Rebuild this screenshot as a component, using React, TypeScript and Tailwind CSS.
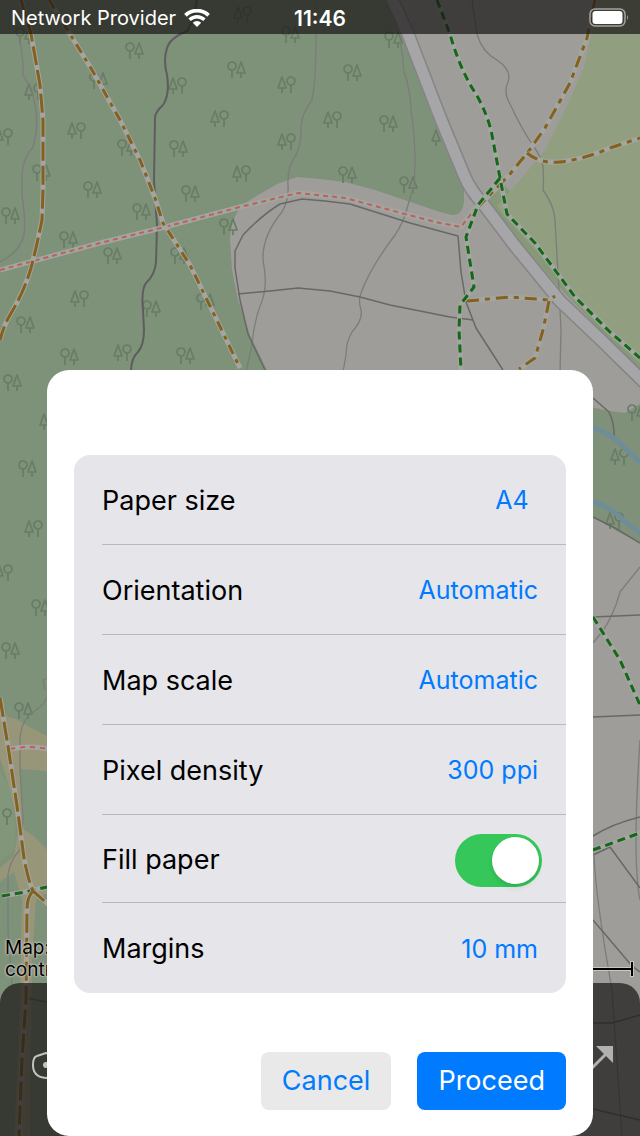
import { useState } from "react";

type Pair = [number, number];

const BROADLEAF_FIRST: Pair[] = [
  [134, 50], [98, 80], [126, 147], [178, 148], [41, 172], [92, 189], [190, 193], [236, 69],
  [24, 35], [290, 34], [393, 39], [352, 72], [388, 123], [347, 174], [408, 184], [10, 215],
  [141, 211], [68, 239], [112, 255], [228, 226], [179, 255], [205, 301], [151, 308], [25, 324],
  [69, 356], [185, 355], [12, 382], [27, 468], [40, 607], [10, 650], [23, 710], [636, 412],
];

const CONIFER_FIRST: Pair[] = [
  [177, 85], [76, 130], [3, 136], [33, 91], [286, 84], [219, 118], [286, 141], [241, 173],
  [332, 119], [79, 298], [122, 352], [33, 528], [3, 572], [619, 456], [614, 520], [242, 14],
  [48, 421], [440, 137],
];

const CASED = "#a3a5a0";

function Track({ d, color, dash, width = 3 }: { d: string; color: string; dash: string; width?: number }) {
  return (
    <>
      <path d={d} stroke={CASED} strokeWidth={5} />
      <path d={d} stroke={color} strokeWidth={width} strokeDasharray={dash} />
    </>
  );
}

function MapView() {
  return (
    <svg
      className="absolute inset-0 h-full w-full"
      viewBox="0 0 640 1136"
      preserveAspectRatio="xMidYMin slice"
      fill="none"
      strokeLinejoin="round"
      aria-hidden="true"
    >
      <defs>
        <g id="broadleaf">
          <circle cx="0" cy="-3" r="4" />
          <path d="M0 1V9" />
        </g>
        <g id="conifer">
          <path d="M0 -7L-4 4H4ZM0 4V9" />
        </g>
      </defs>

      <rect width="640" height="1136" fill="#9f9d99" />
      <path
        fill="#7e9179"
        d="M0 0H392L412 48L440 117L464 175V202Q462 216 452 215L440 212L375 190L345 182L320 179L297 177L277 184L258 195L242 205Q230 220 230 240L232 270L238 300L250 335L268 372V1136H0Z"
      />
      <path fill="#879879" d="M484 200L505 186L640 320V374L600 330L555 283L510 230Z" />
      <path
        fill="#919f80"
        d="M598 0H640V364L604 330L567 286L530 244L504 216L497 206L520 180L545 150L566 108L584 68Z"
      />
      <path fill="#7f9279" d="M590 407L610 411L625 413L640 404V543L615 530L590 515Z" />

      <path fill="#989679" d="M0 716Q14 716 24 724L47 736V771L20 769L24 830L34 836L47 850V893L36 900L32 960L30 1136H14L20 1000L22 900L14 872L0 882V868L14 856L18 830L10 790L0 758Z" />
      <path fill="#82967a" d="M0 770L10 790L16 830L14 850L0 862Z" />

      <g stroke="#687c66" strokeWidth="1.7">
        {BROADLEAF_FIRST.map(([x, y]) => (
          <g key={`${x}-${y}`}>
            <use href="#broadleaf" x={x - 4} y={y} />
            <use href="#conifer" x={x + 5} y={y} />
          </g>
        ))}
        {CONIFER_FIRST.map(([x, y]) => (
          <g key={`${x}-${y}`}>
            <use href="#conifer" x={x - 4} y={y} />
            <use href="#broadleaf" x={x + 5} y={y} />
          </g>
        ))}
        <use href="#broadleaf" x="7" y="816" />
      </g>

      <g stroke="#7b7d79" strokeWidth="1.3">
        <path d="M18 34Q24 55 23 75Q33 90 36 110Q38 130 33 147Q22 160 22 175L22 195Q26 222 24 235Q20 252 0 262" />
        <path d="M316 0V34Q316 80 312 100Q300 116 301 130Q301 145 296 155Q287 167 288 185Q289 200 282 212Q262 236 263 260Q268 285 262 301Q254 320 252 345L246 372" />
        <path d="M400 40Q403 55 404 72Q410 87 411 110Q417 150 414 185L408 205Q404 222 395 235Q370 268 361 293Q358 300 361 310Q363 320 352 332Q346 342 346 355L343 372" />
        <path d="M472 0L477 34Q482 52 497 60Q512 70 508 82Q503 92 510 104Q522 130 534 147Q540 155 543 166Q544 180 543 190Q554 205 555 220L559 290L561 330L560 372" />
        <path d="M640 567L620 592Q614 615 602 632L593 643" />
        <path d="M640 740Q632 860 640 900M594 856Q596 900 612 990L622 1136" />
        <path d="M47 678L43 680L45 690M47 698Q42 707 33 712Q21 720 20 740V770L23 820L20 850Q10 860 8 875V930L12 985" />
      </g>

      <g stroke="#686866" strokeWidth="1.5">
        <path d="M265 370L248 334L240 300L235 268V251L243 235Q262 215 280 204L302 199L325 201L350 204L410 223L458 236L461 272L466 302L476 328L503 370" />
        <path d="M238 294L270 291L298 288L330 291L360 297L390 305L450 317L473 320" />
        <path d="M593 398L609 412Q615 424 614 440M593 517L615 528L640 543" />
        <path d="M593 617L640 615M593 717L640 715" />
        <path d="M593 836Q612 824 640 817M593 855L610 847L640 888M593 920L632 966L640 972" />
        <path d="M593 1023H612L640 1015M593 1109L640 1120M26 998L47 1002" />
      </g>

      <path
        stroke="#5f5c5f"
        strokeWidth="2"
        d="M197 0Q192 25 187 31Q170 38 167 48Q163 60 167 75Q170 95 163 105Q155 112 155 118L154 180L157 225L156 262Q155 275 146 283Q141 290 143 310L144 330Q144 345 138 352Q131 358 131 372"
      />

      <g stroke="#6f8d99" strokeWidth="5">
        <path d="M590 427Q610 432 625 448L643 465" />
        <path d="M590 501Q612 507 623 520L643 535" />
      </g>

      <path stroke="#858487" strokeWidth="14" d="M388 -10L408 34L440 117L464 175Q470 190 484 205L515 246L560 301L600 339L648 386" />
      <path stroke="#a6a5a7" strokeWidth="11" d="M388 -10L408 34L440 117L464 175Q470 190 484 205L515 246L560 301L600 339L648 386" />

      <Track color="#bb625b" dash="5 4" width={2} d="M0 270L100 243L165 227L240 207L298 193L345 198L405 214L440 223L461 227L477 206" />
      <Track color="#84611c" dash="19 5" d="M21 0L31 34L40 85L43 120V190L42 220Q37 245 31 268Q24 292 10 315Q4 325 0 340" />
      <Track color="#84611c" dash="10 6 4 6" d="M49 0L70 34L92 70L120 120L140 160L155 198L163 223L190 265L210 306L240 368" />
      <Track color="#84611c" dash="12 6 5 6" d="M595 0L587 38L570 83L545 128L528 152L510 174L478 207" />
      <Track color="#84611c" dash="12 6 5 6" d="M527 153Q540 164 560 162Q585 159 610 148L640 138" />
      <Track color="#84611c" dash="12 6 5 6" d="M467 301L510 297L549 300L555 296" />
      <Track color="#84611c" dash="12 6 5 6" d="M549 301L543 330L535 358L519 369" />
      <Track color="#146818" dash="8 5" d="M437 0L450 34Q460 70 476 94Q488 115 492 135L500 178L507 214L535 243L575 297L610 332L640 358" />
      <Track color="#146818" dash="8 5" d="M500 178L478 205L466 237L474 287L460 305L459 330L461 370" />
      <Track color="#146818" dash="8 5" d="M593 617L620 660L640 705" />
      <Track color="#146818" dash="8 5" d="M593 850L615 842L640 833" />
      <Track color="#c65a5c" dash="5 5" width={2} d="M10 749Q30 745 47 749" />
      <Track color="#146818" dash="8 5" d="M2 896L25 892L47 887" />
      <Track color="#84611c" dash="19 5" d="M0 698L8 746L17 806L24 858Q28 880 33 891L50 906M33 891Q27 897 27 910L26 1000L22 1060L19 1136" />
    </svg>
  );
}

function StatusBar() {
  return (
    <header className="grid h-[34px] grid-cols-3 items-center bg-[#181616]/70 px-[11px] pt-[2px] text-[20px] leading-none text-white">
      <div className="flex items-center gap-2 whitespace-nowrap">
        <span>Network Provider</span>
        <svg className="h-[18px] w-[26px] shrink-0" viewBox="0 0 26 18" fill="none" role="img" aria-label="Wi-Fi">
          <path d="M1.500 6.300A16.500 16.500 0 0 1 24.500 6.300" stroke="white" strokeWidth="3.800" />
          <path d="M5.600 10.800A10.500 10.500 0 0 1 20.400 10.800" stroke="white" strokeWidth="3.400" />
          <path d="M13 18L8.800 13.800A6 6 0 0 1 17.200 13.800Z" fill="white" />
        </svg>
      </div>
      <time className="text-center text-[21px] font-semibold">11:46</time>
      <svg className="h-[20px] w-[42px] justify-self-end" viewBox="0 0 42 20" fill="none" role="img" aria-label="Battery full">
        <rect x="3" y="1" width="35" height="17" rx="5" stroke="#a3a3a0" strokeWidth="1.500" />
        <rect x="5.500" y="3" width="30" height="13" rx="3" fill="white" />
        <path d="M40 7Q42 9.500 40 12Z" fill="#a3a3a0" />
      </svg>
    </header>
  );
}

const OPTIONS = [
  { label: "Paper size", value: "A4" },
  { label: "Orientation", value: "Automatic" },
  { label: "Map scale", value: "Automatic" },
  { label: "Pixel density", value: "300 ppi" },
];

function OptionRow({ label, value, last = false }: { label: string; value: string; last?: boolean }) {
  const id = label.toLowerCase().replace(" ", "-");
  return (
    <div className={`flex h-[90px] items-center justify-between pt-[3px] pr-7 ${last ? "" : "border-b border-[#b9b9bd]"}`}>
      <span id={id} className="text-[27px]">{label}</span>
      <button type="button" aria-describedby={id} className="min-w-[52px] text-center text-[25px] text-[#007aff]">
        {value}
      </button>
    </div>
  );
}

function PrintDialog() {
  const [fill, setFill] = useState(true);
  return (
    <div role="dialog" aria-modal="true" className="w-full rounded-[22px] bg-white px-[27px] pt-[85px] pb-[26px] text-black">
      <div className="rounded-2xl bg-[#e5e5ea] pl-7">
        {OPTIONS.map((option) => (
          <OptionRow key={option.label} label={option.label} value={option.value} />
        ))}
        <label className="flex h-[88px] items-center justify-between border-b border-[#b9b9bd] pt-[3px] pr-6">
          <span className="text-[27px]">Fill paper</span>
          <input type="checkbox" role="switch" checked={fill} onChange={() => setFill(!fill)} className="peer sr-only" />
          <span className="flex h-[53px] w-[87px] items-center rounded-full bg-[#c7c7cc] p-[3px] peer-checked:justify-end peer-checked:bg-[#35c759]">
            <span className="size-[47px] rounded-full bg-white shadow-md" />
          </span>
        </label>
        <OptionRow label="Margins" value="10 mm" last />
      </div>
      <div className="mt-[59px] flex justify-end gap-[26px] text-[27px]">
        <button type="button" className="h-[58px] rounded-lg bg-[#e9e9ea] px-[21px] text-[#007aff]">Cancel</button>
        <button type="button" className="h-[58px] rounded-lg bg-[#007aff] px-[21px] text-white">Proceed</button>
      </div>
    </div>
  );
}

export default function App() {
  return (
    <main className="relative flex min-h-screen flex-col overflow-hidden font-[Inter,'Liberation_Sans',sans-serif]">
      <MapView />
      <div className="relative flex grow flex-col">
        <StatusBar />
        <div className="flex grow items-end justify-between pb-[2px] pl-[5px]">
          <p className="text-[19px] leading-[22px] text-black [text-shadow:0_0_2px_#c8c8c0,0_0_2px_#c8c8c0,0_0_3px_#c8c8c0]">
            Map:<br />contr
          </p>
          <svg className="mr-[6px] mb-[3px] h-[18px] w-[50px]" viewBox="0 0 50 18" fill="none" aria-hidden="true">
            <path d="M0 9H48M48 1V17" stroke="#c8c8c0" strokeWidth="4" />
            <path d="M0 9H48M48 2V16" stroke="black" strokeWidth="2" />
          </svg>
        </div>
        <footer className="flex h-[153px] items-center justify-between rounded-t-[20px] bg-[#181616]/70 px-[26px] pt-[12px]">
          <button type="button" aria-label="Locate">
            <svg className="h-[34px] w-[40px]" viewBox="0 0 40 34" fill="none" aria-hidden="true">
              <path d="M20 4L11 7Q7 8 7 16Q7 28 20 29Q33 28 33 16Q33 8 29 7Z" stroke="#c2c4bf" strokeWidth="2" />
              <circle cx="20" cy="16" r="3" fill="#c2c4bf" />
            </svg>
          </button>
          <button type="button" aria-label="Share">
            <svg className="h-[52px] w-[40px]" viewBox="0 0 40 52" fill="none" aria-hidden="true">
              <path d="M12 34L32 14" stroke="#b0b2ae" strokeWidth="3" />
              <path d="M22 6H39V23Z" fill="#b0b2ae" />
            </svg>
          </button>
        </footer>
      </div>
      <div className="absolute inset-0 flex items-end px-[47px]">
        <PrintDialog />
      </div>
    </main>
  );
}
